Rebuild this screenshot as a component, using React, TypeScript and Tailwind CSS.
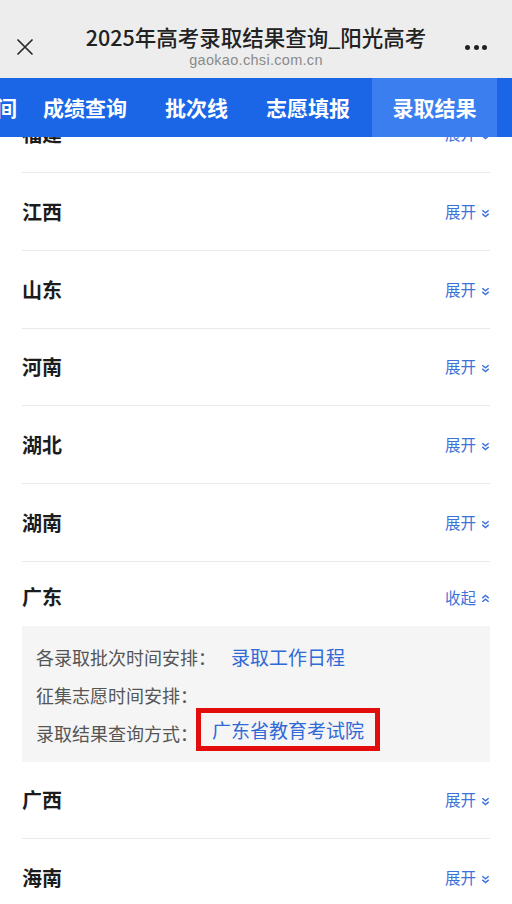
const font = { fontFamily: '"Noto Sans CJK SC", "Noto Sans", sans-serif' };

const tabs = ['成绩查询', '批次线', '志愿填报'];

function Chevrons({ up }: { up?: boolean }) {
  return (
    <svg width="9" height="9" viewBox="0 0 9 9" className={up ? 'rotate-180' : ''}>
      <polyline points="1.3,1.2 4.5,3.9 7.7,1.2" fill="none" stroke="#3d72d9" strokeWidth="1.4" />
      <polyline points="1.3,4.9 4.5,7.6 7.7,4.9" fill="none" stroke="#3d72d9" strokeWidth="1.4" />
    </svg>
  );
}

function Toggle({ open }: { open?: boolean }) {
  return (
    <div className="flex items-center gap-[5px] text-[15.5px] text-[#3d72d9]">
      <span>{open ? '收起' : '展开'}</span>
      <span className="mt-[3px] flex">
        <Chevrons up={open} />
      </span>
    </div>
  );
}

function Row({ name, first, short }: { name: string; first?: boolean; short?: boolean }) {
  return (
    <div
      className={`flex items-center justify-between border-b border-[#e9e9e9] ${
        short ? 'h-[77px]' : 'h-[78px]'
      } ${first ? '-mt-[42px]' : ''}`}
    >
      <span className="text-[20px] font-bold text-[#1c1c1c]">{name}</span>
      <Toggle />
    </div>
  );
}

export default function App() {
  return (
    <div className="h-[904px] w-[512px] overflow-hidden bg-white" style={font}>
      <div className="grid h-[78px] grid-cols-[50px_1fr_50px] bg-[#ededed]">
        <div className="flex justify-center pt-[39px]">
          <svg width="16" height="16" viewBox="0 0 16 16">
            <path d="M1 1 L15 15 M15 1 L1 15" stroke="#2a2a2a" strokeWidth="1.7" strokeLinecap="round" />
          </svg>
        </div>
        <div className="flex flex-col items-center pt-[24px]">
          <span className="text-[21.5px] font-medium leading-[26px] text-[#222]">
            2025年高考录取结果查询_阳光高考
          </span>
          <span
            className="mt-[2px] text-[14.5px] leading-[16px] tracking-[0.3px] text-[#8a8a8a]"
            style={{ fontFamily: '"Liberation Sans", Arial, sans-serif' }}
          >
            gaokao.chsi.com.cn
          </span>
        </div>
        <div className="flex justify-start gap-[3.5px] pt-[45px] pl-[3px]">
          <span className="h-[5px] w-[5px] rounded-full bg-[#222]" />
          <span className="h-[5px] w-[5px] rounded-full bg-[#222]" />
          <span className="h-[5px] w-[5px] rounded-full bg-[#222]" />
        </div>
      </div>

      <div className="relative z-10 flex h-[59px] items-stretch whitespace-nowrap bg-[#1b66e7] text-[21px] font-bold text-white">
        <div className="flex items-center pr-[7px] -ml-[4px]">间</div>
        {tabs.map((t) => (
          <div key={t} className="flex items-center px-[19px]">
            {t}
          </div>
        ))}
        <div className="ml-[3px] flex w-[125px] items-center justify-center bg-[#3a7ef0]">
          录取结果
        </div>
      </div>

      <div className="overflow-hidden px-[22px]">
        <Row name="福建" first />
        <Row name="江西" />
        <Row name="山东" />
        <Row name="河南" short />
        <Row name="湖北" />
        <Row name="湖南" />

        <div className="flex items-center justify-between pt-[21px] pb-[15px] leading-[28px]">
          <span className="text-[20px] font-bold text-[#1c1c1c]">广东</span>
          <Toggle open />
        </div>
        <div className="bg-[#f5f5f5] px-[14px] pt-[12px] pb-[10px] text-[18px] leading-[38px] text-[#555]">
          <div className="flex h-[38px] items-center">
            <span>各录取批次时间安排：</span>
            <span className="ml-[15px] text-[19px] text-[#2f6ad6]">录取工作日程</span>
          </div>
          <div className="h-[38px]">征集志愿时间安排：</div>
          <div className="flex h-[38px] items-center">
            <span>录取结果查询方式：</span>
            <span className="-ml-[2px] shrink-0 -translate-y-[4px] border-[5px] border-[#e30d0d] px-[11px] text-[19px] leading-[33px] text-[#2f6ad6]">
              广东省教育考试院
            </span>
          </div>
        </div>

        <Row name="广西" short />
        <Row name="海南" />
      </div>
    </div>
  );
}
